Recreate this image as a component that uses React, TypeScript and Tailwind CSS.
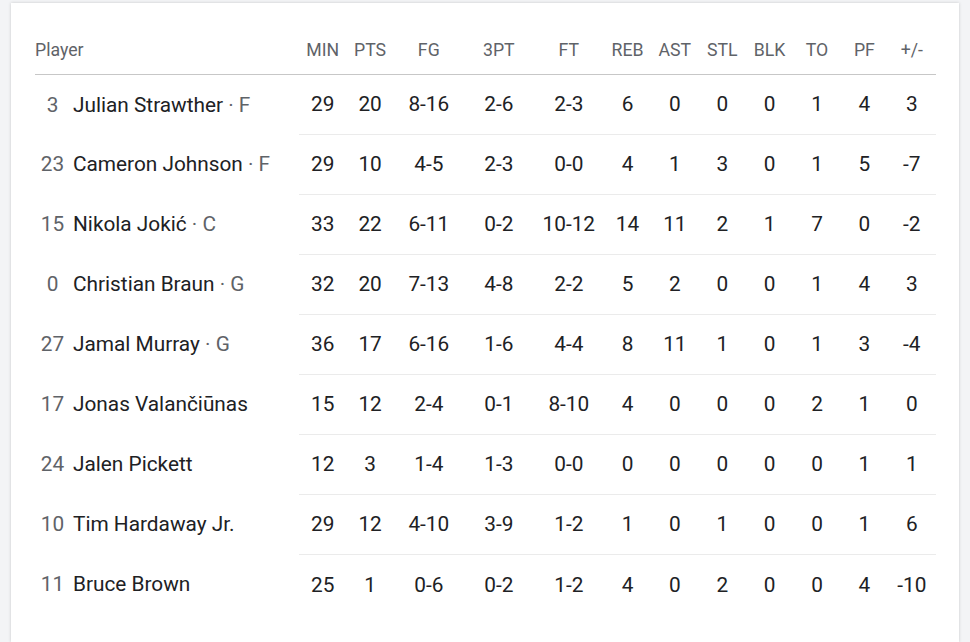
import React from 'react';

interface PlayerLine {
  num: string;
  name: string;
  pos?: string;
  stats: string[];
}

const columns = ['MIN', 'PTS', 'FG', '3PT', 'FT', 'REB', 'AST', 'STL', 'BLK', 'TO', 'PF', '+/-'];
const wide = ['FG', '3PT', 'FT'];

const players: PlayerLine[] = [
  { num: '3', name: 'Julian Strawther', pos: 'F', stats: ['29', '20', '8-16', '2-6', '2-3', '6', '0', '0', '0', '1', '4', '3'] },
  { num: '23', name: 'Cameron Johnson', pos: 'F', stats: ['29', '10', '4-5', '2-3', '0-0', '4', '1', '3', '0', '1', '5', '-7'] },
  { num: '15', name: 'Nikola Jokić', pos: 'C', stats: ['33', '22', '6-11', '0-2', '10-12', '14', '11', '2', '1', '7', '0', '-2'] },
  { num: '0', name: 'Christian Braun', pos: 'G', stats: ['32', '20', '7-13', '4-8', '2-2', '5', '2', '0', '0', '1', '4', '3'] },
  { num: '27', name: 'Jamal Murray', pos: 'G', stats: ['36', '17', '6-16', '1-6', '4-4', '8', '11', '1', '0', '1', '3', '-4'] },
  { num: '17', name: 'Jonas Valančiūnas', stats: ['15', '12', '2-4', '0-1', '8-10', '4', '0', '0', '0', '2', '1', '0'] },
  { num: '24', name: 'Jalen Pickett', stats: ['12', '3', '1-4', '1-3', '0-0', '0', '0', '0', '0', '0', '1', '1'] },
  { num: '10', name: 'Tim Hardaway Jr.', stats: ['29', '12', '4-10', '3-9', '1-2', '1', '0', '1', '0', '0', '1', '6'] },
  { num: '11', name: 'Bruce Brown', stats: ['25', '1', '0-6', '0-2', '1-2', '4', '0', '2', '0', '0', '4', '-10'] },
];

export default function App() {
  return (
    <div
      className="min-h-[642px] bg-[#f3f4f6] px-[11px] pt-[3px]"
      style={{ fontFamily: 'Roboto, "Noto Sans", sans-serif' }}
    >
      <div className="min-h-[639px] bg-white px-6 pt-6 shadow-[0_0_3px_rgba(0,0,0,0.18)]">
        <table className="w-full border-collapse table-fixed">
          <colgroup>
            <col className="w-[264px]" />
            {columns.map((c) => (
              <col key={c} className={wide.includes(c) ? 'w-[70px]' : 'w-[47.4px]'} />
            ))}
          </colgroup>
          <thead>
            <tr className="h-[47px] border-b border-[#c7c7c7] text-[17.7px] text-[#5f6368]">
              <th className="pt-[1px] text-left font-normal">Player</th>
              {columns.map((c) => (
                <th key={c} className="pt-[1px] text-center font-normal">
                  {c}
                </th>
              ))}
            </tr>
          </thead>
          <tbody>
            {players.map((p, i) => (
              <tr key={p.num} className="h-[60px] text-[20.8px] text-[#202124]">
                <td className="whitespace-nowrap pt-[2px]">
                  <span className="inline-block w-[35px] text-center text-[#5f6368]">{p.num}</span>
                  <span className="ml-[3px]">{p.name}</span>
                  {p.pos && <span className="text-[#5f6368]"> · {p.pos}</span>}
                </td>
                {p.stats.map((s, j) => (
                  <td
                    key={j}
                    className={`pt-[2px] text-center ${i > 0 ? 'border-t border-[#ebebeb]' : ''}`}
                  >
                    {s}
                  </td>
                ))}
              </tr>
            ))}
          </tbody>
        </table>
      </div>
    </div>
  );
}
